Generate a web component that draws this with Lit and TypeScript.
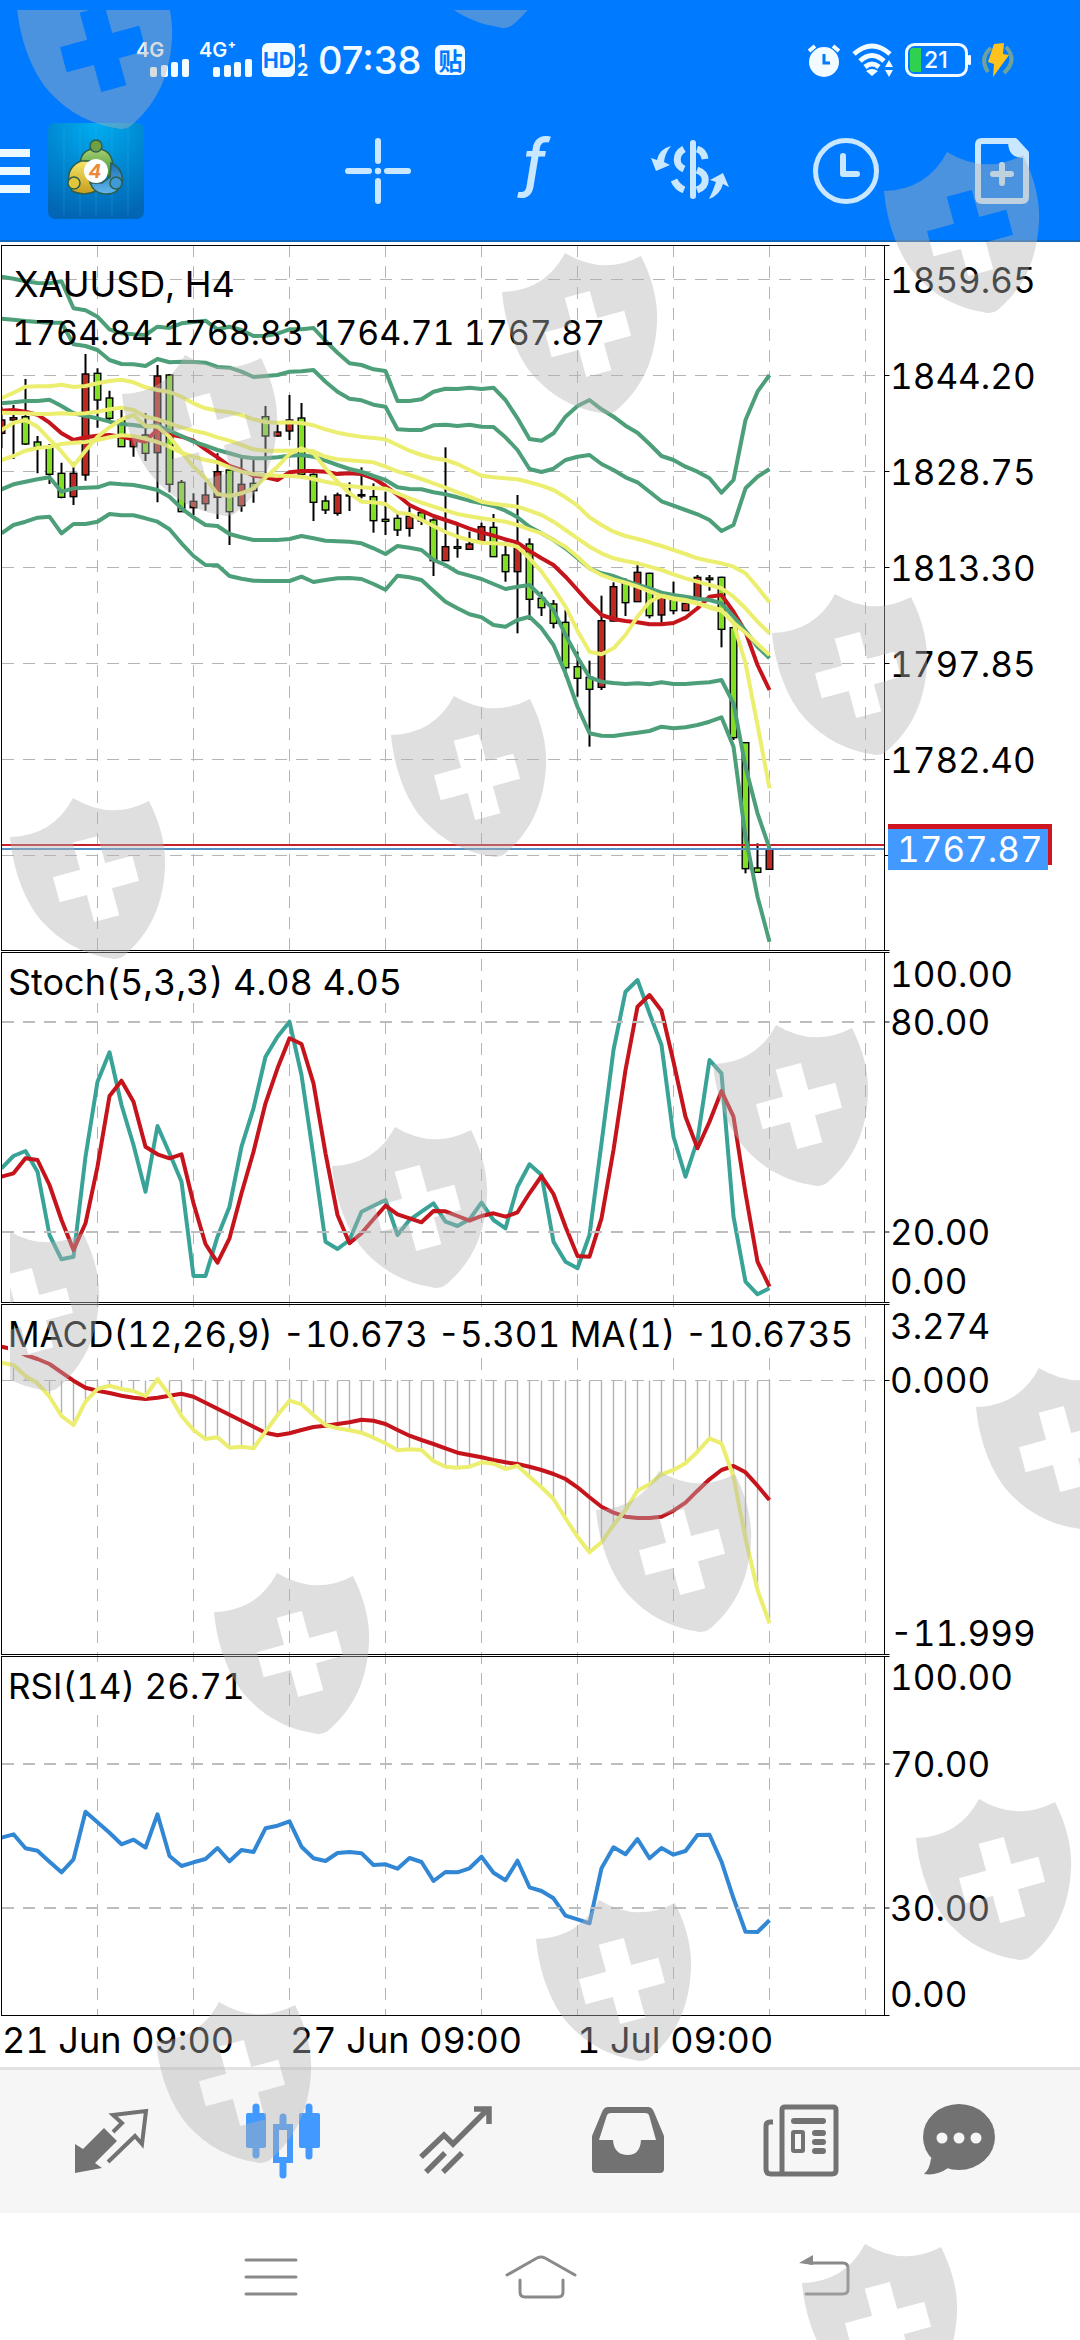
import { LitElement, html, svg, css } from "lit";
import { customElement, state } from "lit/decorators.js";

type Series = number[];

/* Distance between two bars and centre of the first one. */
const STEP = 12;
const FIRST = 1.5;
const PLOT_LEFT = 1.5;
const PLOT_RIGHT = 884.5;

/* Samples are held in thirds of a drawing unit, counted from each panel's base line. */
const SUB = 3;
const barX = (i: number) => FIRST + STEP * i;
const sampleY = (base: number, v: number) => base + v / SUB;
const line = (base: number, values: Series) =>
  values.map((v, i) => `${barX(i)},${sampleY(base, v).toFixed(1)}`).join(" ");

const UPPER_2: Series = [110,116,124,129,130,124,205,211,230,268,280,283,285,260,264,250,246,242,268,260,270,288,287,281,268,268,264,303,338,370,375,388,393,483,483,478,455,446,447,443,447,443,480,535,597,602,580,530,498,480,508,530,557,578,612,648,660,680,695,715,758,720,540,455,405];
const UPPER_1: Series = [236,239,243,246,248,248,313,318,330,360,372,373,378,357,367,365,366,368,381,383,395,411,408,405,395,394,390,425,455,476,481,494,500,568,570,570,556,554,558,554,560,561,592,630,687,696,686,660,650,645,672,690,712,727,755,784,797,810,823,840,873,855,745,710,687];
const MIDDLE: Series = [490,487,483,483,479,498,520,528,535,545,552,555,560,556,572,588,605,617,630,640,650,655,655,652,647,645,650,662,675,687,695,708,720,742,747,748,757,763,772,782,790,798,812,832,860,880,900,925,955,985,1000,1008,1022,1035,1045,1058,1065,1070,1076,1080,1090,1130,1172,1220,1255];
const LOWER_1: Series = [748,733,725,718,712,755,745,743,742,730,733,735,742,750,770,805,832,855,858,882,892,900,900,900,897,888,895,902,904,905,910,925,942,918,923,930,960,975,997,1007,1017,1032,1047,1040,1035,1070,1110,1185,1252,1312,1325,1329,1332,1330,1333,1327,1332,1332,1329,1327,1320,1390,1580,1720,1825];
const LOWER_2: Series = [880,855,845,833,830,880,852,852,845,822,826,826,835,845,868,910,948,975,976,1008,1016,1022,1023,1023,1023,1010,1026,1020,1015,1014,1017,1032,1049,1007,1012,1020,1053,1085,1105,1123,1132,1155,1160,1140,1130,1165,1215,1300,1400,1480,1487,1488,1483,1478,1473,1460,1465,1462,1455,1445,1432,1520,1790,1970,2105];
const SLOW: Series = [475,458,440,439,439,434,441,438,430,423,419,427,442,450,456,470,490,505,512,517,525,538,546,548,547,549,556,568,578,585,590,594,598,615,632,645,655,660,672,690,707,712,715,718,727,737,750,772,797,832,855,875,888,897,907,918,930,942,955,963,970,980,1000,1042,1087];
const MEDIUM: Series = [518,519,520,522,522,520,522,520,515,508,503,510,530,538,550,562,572,580,592,602,615,628,632,632,632,630,634,650,658,661,664,667,680,694,705,717,730,743,757,770,785,791,796,800,812,825,845,870,895,920,940,955,963,970,980,990,1003,1015,1025,1035,1045,1070,1105,1145,1180];
const AVERAGE: Series = [660,648,632,624,620,612,608,606,600,592,586,588,596,606,620,638,650,660,667,682,695,702,706,707,708,710,717,725,732,738,742,744,746,760,775,788,800,811,822,829,835,840,845,855,868,880,900,920,950,985,1005,1018,1028,1040,1054,1068,1077,1083,1090,1103,1112,1148,1178,1212,1245];
const FAST: Series = [570,548,540,560,598,635,677,632,590,562,538,525,558,560,590,636,680,715,762,768,760,745,712,680,642,625,640,685,725,760,785,787,792,818,822,840,858,876,890,900,908,910,912,920,955,995,1045,1100,1172,1235,1243,1225,1185,1130,1085,1067,1075,1080,1090,1100,1110,1150,1270,1455,1645];
const SIGNAL: Series = [512,510,515,524,548,580,600,592,587,585,590,598,605,568,583,590,602,628,652,678,690,707,712,720,697,693,693,695,702,700,702,715,738,765,795,812,828,840,852,866,877,887,898,908,933,955,975,1010,1050,1090,1125,1137,1143,1147,1153,1153,1149,1133,1105,1070,1065,1115,1175,1275,1350];

/* high, body top, body bottom, low, 1 = red body / 0 = green body */
const CANDLES: number[][] = [
  [500,540,580,625,1],[495,533,540,657,1],[417,530,612,615,0],[588,606,620,700,0],[612,620,703,732,0],
  [668,700,772,775,0],[667,700,770,795,1],[342,402,705,722,1],[385,400,480,563,0],[452,474,535,540,0],
  [510,540,620,620,0],[590,597,620,650,1],[520,585,640,663,0],[375,408,638,787,1],[402,405,733,757,0],
  [720,727,815,815,0],[760,784,803,825,1],[727,765,791,812,1],[640,695,772,837,1],[690,690,815,915,0],
  [645,733,797,815,1],[655,730,752,788,0],[498,530,588,700,0],[553,576,588,590,1],[465,540,573,600,1],
  [489,534,703,705,0],[700,703,787,843,0],[767,783,810,822,0],[758,765,820,827,1],[727,765,768,813,0],
  [682,764,768,775,0],[730,770,842,878,0],[755,838,844,885,0],[820,835,870,888,0],[800,828,865,890,1],
  [815,818,843,855,0],[835,840,962,1008,0],[622,920,962,962,1],[857,920,925,953,0],[875,912,928,928,1],
  [848,860,905,905,1],[822,862,950,950,0],[905,945,995,1025,0],[765,915,995,1180,1],[895,912,1078,1140,0],
  [1055,1075,1103,1128,0],[1080,1092,1150,1165,0],[1110,1147,1283,1310,0],[1235,1280,1315,1370,0],[1262,1312,1348,1520,0],
  [1067,1142,1342,1350,1],[1027,1040,1143,1145,1],[1015,1030,1088,1128,0],[965,997,1085,1085,1],[998,1000,1127,1135,0],
  [1065,1072,1125,1148,1],[1025,1080,1112,1123,0],[1085,1090,1112,1112,1],[1005,1012,1075,1080,1],[1005,1014,1019,1052,0],
  [1010,1012,1168,1222,0],[1160,1163,1493,1500,0],[1508,1508,1886,1900,0],[1810,1884,1897,1897,0],[1820,1828,1888,1888,1],
];

const STOCH_K: Series = [685,648,633,695,885,958,950,650,425,337,495,615,755,558,640,725,1008,1008,890,800,620,505,350,290,245,405,650,905,927,900,815,797,780,885,840,815,790,845,858,838,788,840,865,740,673,705,905,965,985,885,610,330,155,120,220,315,590,710,600,360,400,830,1025,1063,1045];
const STOCH_D: Series = [710,700,655,660,735,840,930,850,680,468,422,485,620,643,655,643,790,912,968,895,760,635,490,385,295,312,430,640,825,910,880,838,797,823,835,847,813,814,828,842,828,820,830,817,760,708,762,860,948,950,835,630,390,200,165,212,365,530,625,545,453,530,760,965,1040];
const MACD: Series = [218,225,258,280,320,378,405,335,297,287,297,303,318,267,315,378,420,447,442,473,470,475,425,375,332,343,375,405,415,421,428,443,460,481,478,480,513,530,533,530,517,521,537,527,560,592,627,685,740,787,757,705,660,602,583,553,540,520,485,445,460,560,745,900,1000];
const MACD_SIGNAL: Series = [170,178,195,207,222,247,272,293,302,309,317,323,327,323,317,311,320,338,356,374,392,410,428,436,430,420,411,407,402,397,389,392,402,420,437,450,462,475,488,495,502,510,517,522,530,540,552,567,592,622,650,668,680,684,684,680,662,638,602,568,540,528,547,587,630];
const RSI: Series = [563,553,595,602,635,667,628,485,517,548,583,569,593,493,618,648,637,627,594,634,600,606,535,527,514,590,625,633,609,606,610,645,643,656,624,636,693,666,667,655,620,668,691,632,712,723,745,797,808,820,655,592,613,567,625,594,614,603,555,554,635,745,845,846,811];

const BASE = { price: 240, stoch: 940, macd: 1290, rsi: 1650 };

const PANELS = [
  { top: 245.5, bottom: 950.5 },
  { top: 952.5, bottom: 1302.5 },
  { top: 1304.5, bottom: 1654.5 },
  { top: 1656.5, bottom: 2015.5 },
];

const PRICE_SCALE = ["1859.65", "1844.20", "1828.75", "1813.30", "1797.85", "1782.40"];
const GRID_COLUMNS = [97.5, 193.5, 289.5, 385.5, 481.5, 577.5, 673.5, 769.5, 865.5];
const GRID_ROWS = [279.5, 375.5, 471.5, 567.5, 663.5, 759.5, 855.5];
const LEVELS = [1022, 1232, 1764, 1908];
const SCALE_TEXT = [
  ["100.00", 987], ["80.00", 1035], ["20.00", 1245], ["0.00", 1294],
  ["3.274", 1339], ["0.000", 1393], ["-11.999", 1646],
  ["100.00", 1690], ["70.00", 1777], ["30.00", 1921], ["0.00", 2007],
] as const;
const DATES = [["21 Jun 09:00", 2], ["27 Jun 09:00", 290], ["1 Jul 09:00", 577]] as const;

@customElement("market-chart")
export class MarketChart extends LitElement {
  static styles = css`
    :host { display: block; background: #fff; }
    .chart { display: block; width: 100%; height: auto; }
    text {
      font-family: Inter, "Liberation Sans", sans-serif; font-size: 36px; fill: #000;
      font-variant-numeric: tabular-nums;
    }
    .scale { font-size: 35px; }
    .quote { font-size: 34px; }
    .frame { fill: none; stroke: #000; stroke-width: 1; }
    .tick { stroke: #000; stroke-width: 1; }
    .grid { stroke: #b4b4b4; stroke-width: 1; stroke-dasharray: 12 9; }
    .level { stroke: #bdbdbd; stroke-width: 2; stroke-dasharray: 12 9; }
    .mask { fill: #fff; }
    .curve { fill: none; stroke-width: 4; stroke-linejoin: round; }
    .green { stroke: #4c9f79; }
    .yellow { stroke: #ebee6e; }
    .red { stroke: #c6141c; }
    .teal { stroke: #3aa398; }
    .blue { stroke: #3287d4; }
    .wick { stroke: #000; stroke-width: 2; }
    .body { stroke: #000; stroke-width: 1.4; }
    .up { fill: #be2a22; }
    .down { fill: #82e024; }
    .histogram { stroke: #b2b2b2; stroke-width: 1.4; }
    .ask { stroke: #c6202a; stroke-width: 2; }
    .bid { stroke: #5590c4; stroke-width: 2; }
    .ask-tag { fill: #cf1620; }
    .bid-tag { fill: #4299ff; }
    .tag-text { fill: #fff; }
  `;

  private curve(base: number, values: Series, tone: string) {
    return svg`<polyline class="curve ${tone}" points=${line(base, values)}></polyline>`;
  }

  private candle(c: number[], i: number) {
    const x = barX(i);
    const [high, top, bottom, low] = c.slice(0, 4).map((v) => sampleY(BASE.price, v));
    return svg`
      <line class="wick" x1=${x} x2=${x} y1=${high} y2=${low}></line>
      <rect class="body ${c[4] ? "up" : "down"}" x=${x - 3.3} width="6.6" y=${top}
        height=${Math.max(bottom - top, 1)}></rect>`;
  }

  private tick(y: number) {
    return svg`<line class="tick" x1=${PLOT_RIGHT} x2=${PLOT_RIGHT + 5} y1=${y} y2=${y}></line>`;
  }

  render() {
    return html`
      <svg class="chart" viewBox="0 242 1080 1825" role="group" aria-label="XAUUSD H4 chart">
        <clipPath id="plot"><rect x=${PLOT_LEFT} y="245" width="883" height="1771"></rect></clipPath>
        ${GRID_COLUMNS.map((x) => svg`<line class="grid" x1=${x} x2=${x} y1="245" y2="2015"></line>`)}
        ${GRID_ROWS.map((y) => svg`<line class="grid" x1="2" x2="884" y1=${y} y2=${y}></line>${this.tick(y)}`)}
        <line class="grid" x1="2" x2="884" y1="1380.5" y2="1380.5"></line>

        <g clip-path="url(#plot)">
          ${CANDLES.map((c, i) => this.candle(c, i))}
          <line class="ask" x1="2" x2="886" y1="845" y2="845"></line>
          <line class="bid" x1="2" x2="886" y1="849" y2="849"></line>
          ${this.curve(BASE.price, SIGNAL, "red")}
          ${[UPPER_2, UPPER_1, MIDDLE, LOWER_1, LOWER_2].map((s) => this.curve(BASE.price, s, "green"))}
          ${[SLOW, MEDIUM, AVERAGE, FAST].map((s) => this.curve(BASE.price, s, "yellow"))}

          ${this.curve(BASE.stoch, STOCH_K, "teal")}
          ${this.curve(BASE.stoch, STOCH_D, "red")}

          ${MACD.map((v, i) => svg`<line class="histogram" x1=${barX(i)} x2=${barX(i)}
            y1="1380.5" y2=${sampleY(BASE.macd, v)}></line>`)}
          ${this.curve(BASE.macd, MACD_SIGNAL, "red")}
          ${this.curve(BASE.macd, MACD, "yellow")}

          ${this.curve(BASE.rsi, RSI, "blue")}
        </g>

        ${LEVELS.map((y) => svg`<line class="level" x1="2" x2="884" y1=${y} y2=${y}></line>${this.tick(y)}`)}
        <rect class="mask" x="8" y="958" width="400" height="45"></rect>
        <rect class="mask" x="8" y="1310" width="842" height="45"></rect>
        <rect class="mask" x="8" y="1662" width="236" height="45"></rect>

        ${PANELS.map((p) => svg`
          <rect class="frame" x=${PLOT_LEFT} y=${p.top} width=${PLOT_RIGHT - PLOT_LEFT}
            height=${p.bottom - p.top}></rect>
          ${this.tick(p.top)}${this.tick(p.bottom)}`)}
        ${this.tick(1380.5)}

        <text x="14" y="297">XAUUSD, H4</text>
        <text class="quote" x="12" y="345">1764.84 1768.83 1764.71 1767.87</text>
        <text x="8" y="995">Stoch(5,3,3) 4.08 4.05</text>
        <text class="scale" x="8" y="1347">MACD(12,26,9) -10.673 -5.301 MA(1) -10.6735</text>
        <text class="scale" x="8" y="1699">RSI(14) 26.71</text>

        ${PRICE_SCALE.map((t, i) => svg`<text class="scale" x="890" y=${293 + 96 * i}>${t}</text>`)}
        ${SCALE_TEXT.map(([t, y]) => svg`<text class="scale" x="890" y=${y}>${t}</text>`)}
        ${DATES.map(([t, x]) => svg`<text x=${x} y="2053">${t}</text>`)}

        <rect class="ask-tag" x="888" y="824" width="164" height="41"></rect>
        <rect class="bid-tag" x="888" y="829" width="160" height="41"></rect>
        <text class="scale tag-text" x="897" y="862">1767.87</text>
      </svg>`;
  }
}

@customElement("status-bar")
export class StatusBar extends LitElement {
  static styles = css`
    :host {
      display: flex; justify-content: space-between; align-items: center;
      height: 120px; padding: 0 66px 0 136px; color: #f2fbff;
      font-family: Inter, "Liberation Sans", sans-serif;
    }
    .group { display: flex; align-items: center; gap: 10px; }
    .right { gap: 11px; }
    .time { font-size: 38px; line-height: 40px; font-weight: 500; }
    .badge {
      margin-left: 4px; width: 30px; height: 30px; border-radius: 6px; background: #f2fbff; color: #007aff;
      font: 700 24px/30px "Noto Sans CJK SC", sans-serif; text-align: center;
    }
    svg { display: block; fill: currentColor; overflow: visible; }
    .net { font-size: 20px; font-weight: 600; }
    .hd { font-size: 21px; font-weight: 700; fill: #007aff; }
    .sim { font-size: 18px; font-weight: 700; }
    .level { font-size: 23px; font-weight: 500; }
    .stroke { fill: none; stroke: currentColor; }
    .cut { fill: none; stroke: #007aff; }
  `;

  private signal(label: string) {
    return html`<svg width="53" height="36" viewBox="0 0 53 36">
      <text class="net" x="0" y="15">${label}</text>
      <rect x="14" y="25" width="7" height="10" rx="2"></rect>
      <rect x="25" y="23" width="7" height="12" rx="2"></rect>
      <rect x="35" y="20" width="7" height="15" rx="2"></rect>
      <rect x="46" y="17" width="7" height="18" rx="2"></rect>
    </svg>`;
  }

  render() {
    return html`
      <div class="group">
        ${this.signal("4G")} ${this.signal("4G⁺")}
        <svg width="46" height="34" viewBox="0 0 46 34">
          <rect width="33" height="34" rx="6"></rect>
          <text class="hd" x="1" y="25">HD</text>
          <text class="sim" x="36" y="14">1</text>
          <text class="sim" x="35" y="33">2</text>
        </svg>
        <span class="time">07:38</span>
        <span class="badge">贴</span>
      </div>
      <div class="group right">
        <svg width="34" height="34" viewBox="0 0 34 34">
          <circle cx="17" cy="19" r="15"></circle>
          <path class="stroke" stroke-width="4" d="M2 8L8 3M32 8L26 3"></path>
          <path class="cut" stroke-width="3" d="M17 11V20H23"></path>
        </svg>
        <svg width="42" height="34" viewBox="0 0 42 34">
          <path class="stroke" stroke-width="5" d="M2 11Q20 -5 38 11M8 18Q20 7 32 18M13 24Q20 18 27 24"></path>
          <path d="M14 28Q20 24 26 28L20 33ZM33 24L37 17L41 24ZM33 27H41L37 34Z"></path>
        </svg>
        <svg width="66" height="34" viewBox="0 0 66 34">
          <rect class="stroke" stroke-width="3" x="1.500" y="1.500" width="60" height="31" rx="8"></rect>
          <path fill="#2fd14e" d="M8 5H16V29H8Q5 29 5 26V8Q5 5 8 5Z"></path>
          <rect x="63" y="12" width="3" height="10" rx="1"></rect>
          <text class="level" x="19" y="25">21</text>
        </svg>
        <svg width="32" height="36" viewBox="0 0 32 36">
          <path fill="none" stroke="#6fa39a" stroke-width="4" d="M9 6Q-3 16 6 30M24 5Q36 18 22 31"></path>
          <path fill="#fdc21c" d="M12 2L22 1L21 12L27 13L11 35L12 22L6 20Z"></path>
        </svg>
      </div>`;
  }
}

const tools = [
  { name: "Crosshair", icon: svg`<path class="s" d="M0 -30V-10M0 30V10M-30 0H-9M30 0H9"></path><circle class="f" r="3.200"></circle>` },
  { name: "Indicators", icon: svg`<text class="fn" x="0" y="14" text-anchor="middle">ƒ</text>` },
  { name: "Trade", icon: svg`
      <path class="s" d="M3 -28V25"></path>
      <path class="s butt" d="M-6 -22C-15 -17 -15 -6 -6 -2M-16 9Q-13 16 -6 19M7 -22Q14 -20 15 -12M7 -1C18 3 18 15 7 19"></path>
      <path class="f" d="M-19 -25Q-31 -22 -33 -11L-39 -13L-34 0L-20 -6L-26 -9Q-25 -18 -19 -25ZM19 28Q23 20 26 11L20 9L33 2L39 16L33 13Q30 24 19 28Z"></path>` },
  { name: "Periods", icon: svg`<circle class="s thin" r="30.500"></circle><path class="s" d="M-3 -15V3H11"></path>` },
  { name: "New order", icon: svg`
      <path class="s" d="M-20 -30H13L24 -18V26Q24 30 20 30H-20Q-24 30 -24 26V-26Q-24 -30 -20 -30Z"></path>
      <path class="f" d="M6 -30H14L26 -17V-13Q14 -13 11 -16Q6 -20 6 -30Z"></path>
      <path class="s" d="M0 -6V12M-9 3H9"></path>` },
];

@customElement("chart-toolbar")
export class ChartToolbar extends LitElement {
  static styles = css`
    :host { display: flex; align-items: center; height: 102px; padding-bottom: 18px; }
    button { border: 0; padding: 0; background: none; display: grid; place-items: center; cursor: pointer; }
    svg { display: block; overflow: visible; }
    .tools { flex: 1; display: grid; grid-template-columns: repeat(5, 1fr); margin-left: 156px; }
    .logo { margin-left: 18px; }
    .bars { fill: #eef9ff; }
    .s { fill: none; stroke: #c9e7ff; stroke-width: 6; stroke-linecap: round; stroke-linejoin: round; }
    .butt { stroke-width: 7; stroke-linecap: butt; }
    .thin { stroke-width: 5; }
    .f { fill: #c9e7ff; }
    .fn { fill: #c9e7ff; font: italic 500 64px Inter, "Liberation Sans", sans-serif; }
    .four { font: italic 700 19px Inter, "Liberation Sans", sans-serif; fill: #ee8836; }
  `;

  render() {
    return html`
      <button aria-label="Menu">
        <svg class="bars" width="30" height="48" viewBox="0 0 30 48">
          <rect y="2" width="30" height="8"></rect><rect y="20" width="30" height="8"></rect>
          <rect y="38" width="30" height="8"></rect>
        </svg>
      </button>
      <svg class="logo" width="96" height="96" viewBox="0 0 96 96" role="img" aria-label="MetaTrader 4">
        <defs>
          <radialGradient id="sky" cx=".5" cy="0" r="1">
            <stop offset="0" stop-color="#00aef0"></stop><stop offset=".55" stop-color="#0086d0"></stop>
            <stop offset="1" stop-color="#0266b4"></stop>
          </radialGradient>
          <linearGradient id="leaf" x2="0" y2="1"><stop stop-color="#a8d070"></stop><stop offset="1" stop-color="#2f8a35"></stop></linearGradient>
          <linearGradient id="gold" x2="0" y2="1"><stop stop-color="#f5e568"></stop><stop offset="1" stop-color="#c79d1c"></stop></linearGradient>
          <linearGradient id="sea" x2="0" y2="1"><stop stop-color="#1c6fb4"></stop><stop offset="1" stop-color="#62b8ec"></stop></linearGradient>
        </defs>
        <rect width="96" height="96" rx="7" fill="url(#sky)"></rect>
        <path stroke="#35b4e6" stroke-opacity=".3" d="M16 4V92M32 4V92M48 4V92M64 4V92M80 4V92"></path>
        <g stroke="#2b5f50" stroke-width="1.500">
          <path fill="url(#leaf)" d="M32 43Q32 28 44 26H52Q64 28 65 43L62 57L52 38H44L36 44Z"></path>
          <path fill="url(#gold)" d="M21 58Q19 44 33 38L42 38L38 52L48 68Q36 74 24 68Z"></path>
          <path fill="url(#sea)" d="M63 40Q76 46 74 60Q70 72 56 71Q46 70 42 60L54 60L62 54Z"></path>
          <circle cx="48" cy="23" r="6" fill="#6fa043"></circle>
          <circle cx="26" cy="60" r="6" fill="#e2c63a"></circle>
          <circle cx="68" cy="60" r="6" fill="#3f9ad8"></circle>
        </g>
        <circle cx="48" cy="48" r="12" fill="#fff"></circle>
        <text class="four" x="47" y="55" text-anchor="middle">4</text>
      </svg>
      <div class="tools">
        ${tools.map((t) => html`<button aria-label=${t.name}>
          <svg width="80" height="80" viewBox="-40 -40 80 80">${t.icon}</svg>
        </button>`)}
      </div>`;
  }
}

const tabs = [
  { name: "Quotes", icon: svg`
      <path d="M-35 2L-27 7L-6 -14L7 -1L-15 21L-8 26L-35 31Z"></path>
      <path class="o" stroke-width="4" d="M-2 20L25 -6L32 2L36 -31L3 -27L12 -19L3 -10"></path>` },
  { name: "Chart", icon: svg`
      <path class="o" stroke-width="7" stroke-linecap="round" d="M-26 -35V13M27 -35V14M1 -25V-16M1 22V33"></path>
      <rect x="-36" y="-29" width="20" height="35" rx="2"></rect><rect x="17" y="-29" width="21" height="35" rx="2"></rect>
      <rect class="o" stroke-width="6" x="-6" y="-15" width="14" height="33"></rect>` },
  { name: "Trade", icon: svg`
      <path class="o" stroke-width="5.500" d="M-33 15L-10 -7L-1 2L33 -32M20 -33H35V-18M-28 30L-9 11M-11 30L8 11"></path>` },
  { name: "Mailbox", icon: svg`
      <path fill-rule="evenodd" d="M-18 -35H22Q26 -35 28 -30L38 -6V27Q38 31 34 31H-30Q-34 31 -34 27V-6L-24 -30Q-22 -35 -18 -35ZM-15 -29Q-18 -29 -19 -27L-27 -2H-13Q-12 13 2 13Q14 13 15 -2H30L23 -27Q22 -29 19 -29Z"></path>` },
  { name: "News", icon: svg`
      <path class="o" stroke-width="5" d="M-16 31V-32Q-16 -35 -13 -35H35Q38 -35 38 -32V28Q38 32 34 32H-27Q-32 32 -32 27V-16Q-32 -20 -28 -20H-25"></path>
      <path class="o" stroke-width="6" stroke-linecap="round" d="M-4 -21H25M17 -9H25M17 0H25M17 9H25"></path>
      <rect class="o" stroke-width="4" x="-5" y="-10" width="10" height="19" rx="1"></rect>` },
  { name: "Messages", icon: svg`
      <path d="M-39 16Q-40 27 -46 32Q-33 34 -22 26Z"></path>
      <ellipse cx="-11" cy="-5" rx="36" ry="33"></ellipse>
      <g class="dots"><circle cx="-28" cy="-4" r="5.500"></circle><circle cx="-11" cy="-4" r="5.500"></circle><circle cx="6" cy="-4" r="5.500"></circle></g>` },
];

@customElement("tab-bar")
export class TabBar extends LitElement {
  static styles = css`
    :host {
      display: grid; grid-template-columns: repeat(6, 1fr); padding: 0 24px; box-sizing: border-box;
      height: 146px; border-top: 3px solid #e2e2e2; background: #f6f6f6;
    }
    button { border: 0; padding: 0; background: none; color: #727272; display: grid; place-items: center; cursor: pointer; }
    .active { color: #4299ff; }
    svg { display: block; fill: currentColor; overflow: visible; }
    .o { fill: none; stroke: currentColor; }
    .dots { fill: #f6f6f6; }
  `;

  @state() private active = 1;

  render() {
    return tabs.map((t, i) => html`
      <button class=${i === this.active ? "active" : ""} aria-label=${t.name} @click=${() => (this.active = i)}>
        <svg width="96" height="96" viewBox="-48 -48 96 96">${t.icon}</svg>
      </button>`);
  }
}

const navs = [
  { name: "Recent apps", icon: svg`<path stroke-width="3" d="M-24 -17H26M-24 0H26M-24 17H26"></path>` },
  { name: "Home", icon: svg`<path stroke-width="3" d="M-33 -2L-3 -19Q1 -21 5 -19L35 -2M-20 3V15Q-20 20 -15 20H18Q23 20 23 15V3"></path>` },
  { name: "Back", icon: svg`<path stroke-width="3" d="M0 -14H33Q38 -14 38 -9V12Q38 17 33 17H-4"></path><path class="tip" d="M-11 -14L3 -22V-12Z"></path>` },
];

@customElement("system-nav")
export class SystemNav extends LitElement {
  static styles = css`
    :host {
      display: grid; grid-template-columns: repeat(3, 1fr); padding: 0 12.5%; height: 127px; background: #fff;
    }
    button { border: 0; padding: 0; background: none; display: grid; place-items: center; cursor: pointer; }
    svg { display: block; overflow: visible; fill: none; stroke: #8a8a8a; stroke-linecap: round; stroke-linejoin: round; }
    .tip { fill: #8a8a8a; stroke: none; }
  `;

  render() {
    return navs.map((n) => html`<button aria-label=${n.name}>
      <svg width="80" height="60" viewBox="-40 -30 80 60">${n.icon}</svg>
    </button>`);
  }
}

const SHIELDS = [
  [103, 49], [485, -52], [970, 233], [588, 334], [208, 436], [858, 675], [477, 777], [96, 879], [799, 1106],
  [418, 1208], [30, 1311], [682, 1552], [1062, 1449], [300, 1654], [622, 1981], [1002, 1880], [242, 2083], [888, 2325],
];

@customElement("app-root")
export class AppRoot extends LitElement {
  static styles = css`
    :host { display: block; position: relative; overflow: hidden; background: #fff; }
    .header { background: #007aff; box-sizing: border-box; border-bottom: 2px solid #1268bd; height: 242px; }
    .shields { position: absolute; inset: 0; width: 100%; height: 100%; pointer-events: none; }
    .shield { fill: #b3b3b3; fill-opacity: 0.42; fill-rule: evenodd; }
  `;

  render() {
    return html`
      <header class="header">
        <status-bar></status-bar>
        <chart-toolbar></chart-toolbar>
      </header>
      <main><market-chart></market-chart></main>
      <nav><tab-bar></tab-bar></nav>
      <system-nav></system-nav>
      <svg class="shields" viewBox="0 0 1080 2340" preserveAspectRatio="xMidYMin slice" aria-hidden="true">
        <clipPath id="area"><rect x="10" y="10" width="1070" height="2330"></rect></clipPath>
        <g clip-path="url(#area)">
          ${SHIELDS.map(([x, y]) => svg`<path class="shield" transform="translate(${x} ${y})"
            d="M-23 -81Q15 -58 53 -78C66 -52 70 -30 69 -11C67 25 55 53 30 75Q23 82 13 79C-20 74 -45 55 -60 35C-76 12 -84 -18 -86 -42Q-43 -43 -23 -81Z
               M-23.300 -36.300L1.800 -43L9.200 -15.900L36.300 -23.300L43 1.800L15.900 9.200L23.300 36.300L-1.800 43L-9.200 15.900L-36.300 23.300L-43 -1.800L-15.900 -9.200Z"></path>`)}
        </g>
      </svg>`;
  }
}
